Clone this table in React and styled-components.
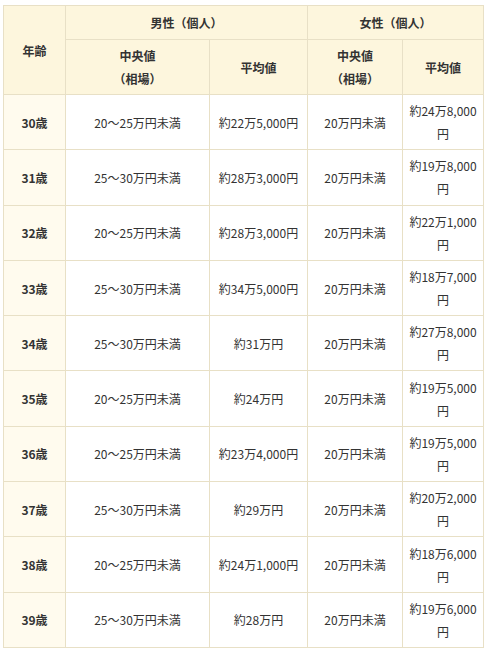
import React from "react";
import styled, { createGlobalStyle } from "styled-components";

const GlobalStyle = createGlobalStyle`
  body {
    margin: 0;
    background: #fff;
    font-family: "Noto Sans CJK JP", "Noto Sans", sans-serif;
    color: #333;
  }
`;

const Wrap = styled.div`
  padding: 5px 3px;
`;

const Table = styled.table`
  width: 480px;
  border-collapse: collapse;
  table-layout: fixed;
  font-size: 12px;
  line-height: 23px;
`;

const Th = styled.th`
  background: #fdf6dd;
  border: 1px solid #e8e0c6;
  font-weight: bold;
  text-align: center;
  vertical-align: middle;
  padding: ${(p) => (p.$tall ? "4px 5px" : "5px 5px")};
  height: ${(p) => (p.$h ? p.$h : "auto")};
  box-sizing: border-box;
`;

const AgeCell = styled.td`
  background: #fffbee;
  border: 1px solid #e8e0c6;
  font-weight: bold;
  text-align: center;
  vertical-align: middle;
  padding: 4px 5px;
  height: 55.3px;
  box-sizing: border-box;
`;

const Td = styled.td`
  background: #fff;
  border: 1px solid #e8e0c6;
  text-align: center;
  vertical-align: middle;
  padding: 4px 5px;
  height: 55.3px;
  box-sizing: border-box;
`;

const rows = [
  ["30歳", "20～25万円未満", "約22万5,000円", "20万円未満", "約24万8,000円"],
  ["31歳", "25～30万円未満", "約28万3,000円", "20万円未満", "約19万8,000円"],
  ["32歳", "20～25万円未満", "約28万3,000円", "20万円未満", "約22万1,000円"],
  ["33歳", "25～30万円未満", "約34万5,000円", "20万円未満", "約18万7,000円"],
  ["34歳", "25～30万円未満", "約31万円", "20万円未満", "約27万8,000円"],
  ["35歳", "20～25万円未満", "約24万円", "20万円未満", "約19万5,000円"],
  ["36歳", "20～25万円未満", "約23万4,000円", "20万円未満", "約19万5,000円"],
  ["37歳", "25～30万円未満", "約29万円", "20万円未満", "約20万2,000円"],
  ["38歳", "20～25万円未満", "約24万1,000円", "20万円未満", "約18万6,000円"],
  ["39歳", "25～30万円未満", "約28万円", "20万円未満", "約19万6,000円"],
];

export default function App() {
  return (
    <Wrap>
      <GlobalStyle />
      <Table>
        <colgroup>
          <col style={{ width: 62 }} />
          <col style={{ width: 144 }} />
          <col style={{ width: 98 }} />
          <col style={{ width: 95 }} />
          <col style={{ width: 81 }} />
        </colgroup>
        <thead>
          <tr>
            <Th rowSpan={2}>年齢</Th>
            <Th colSpan={2} $h="34px">男性（個人）</Th>
            <Th colSpan={2} $h="34px">女性（個人）</Th>
          </tr>
          <tr>
            <Th $tall $h="55px">
              中央値
              <br />
              （相場）
            </Th>
            <Th $tall $h="55px">平均値</Th>
            <Th $tall $h="55px">
              中央値
              <br />
              （相場）
            </Th>
            <Th $tall $h="55px">平均値</Th>
          </tr>
        </thead>
        <tbody>
          {rows.map((r) => (
            <tr key={r[0]}>
              <AgeCell>{r[0]}</AgeCell>
              <Td>{r[1]}</Td>
              <Td>{r[2]}</Td>
              <Td>{r[3]}</Td>
              <Td>{r[4]}</Td>
            </tr>
          ))}
        </tbody>
      </Table>
    </Wrap>
  );
}
